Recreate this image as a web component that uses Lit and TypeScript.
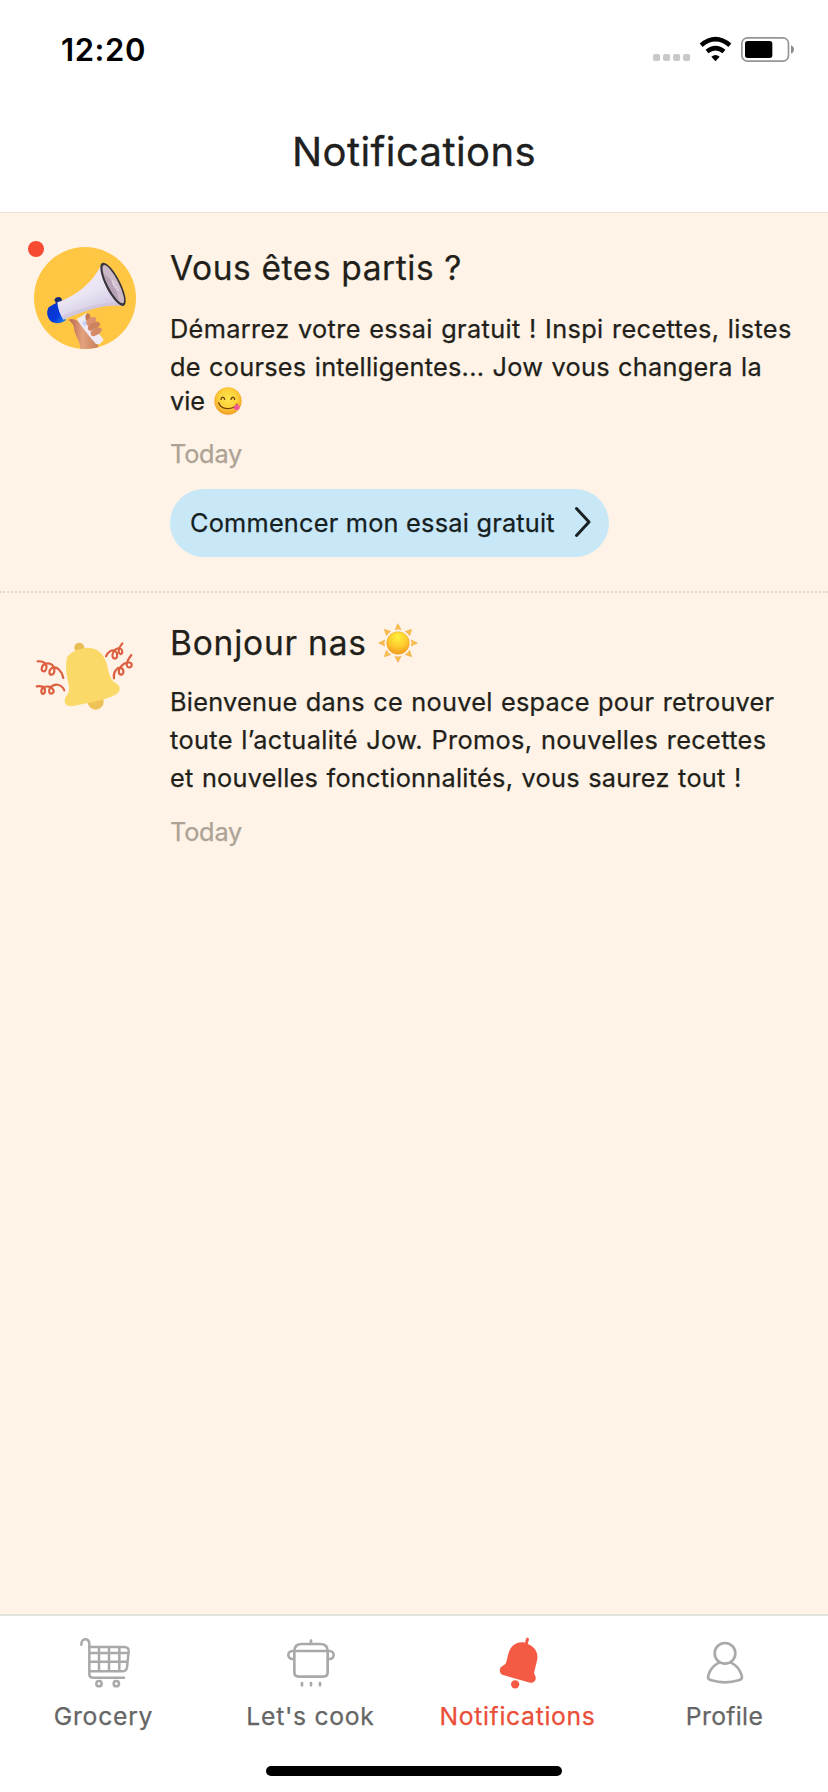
import { LitElement, html, svg, css, TemplateResult } from "lit";

interface Line {
  text: string;
  tracking: number;
  short?: boolean;
  emoji?: TemplateResult;
}

interface Notice {
  unread: boolean;
  picture: TemplateResult;
  title: string;
  tracking: number;
  titleEmoji?: TemplateResult;
  lines: Line[];
  date: string;
  action?: string;
}

const yumEmoji = html`<svg class="yum" viewBox="0 0 84 84" aria-hidden="true">
  <defs>
    <radialGradient id="face" cx="50%" cy="42%" r="58%">
      <stop offset="0" stop-color="#ffe54a" />
      <stop offset="0.6" stop-color="#fdd03a" />
      <stop offset="1" stop-color="#f19a25" />
    </radialGradient>
  </defs>
  <circle cx="42" cy="42" r="41" fill="url(#face)" />
  <path d="M21 37c2-9 9-9 11 0M51 37c2-9 9-9 11 0" fill="none" stroke="#6b3c10" stroke-width="4" stroke-linecap="round" />
  <path d="M14 47c8 22 42 24 55 4" fill="none" stroke="#7a420f" stroke-width="4" stroke-linecap="round" />
  <path d="M60 59c3-6 10-9 16-3 4 7-3 14-10 13-5-1-8-5-6-10z" fill="#f45c9c" />
  <path d="M64 59l6 5" stroke="#d63a7c" stroke-width="2" />
</svg>`;

const sunEmoji = html`<svg class="sun" viewBox="-60 -60 120 120" aria-hidden="true">
  <defs>
    <radialGradient id="sunBody" cx="50%" cy="25%" r="75%">
      <stop offset="0" stop-color="#fff03c" />
      <stop offset="0.55" stop-color="#fdcb2e" />
      <stop offset="1" stop-color="#f39a1f" />
    </radialGradient>
  </defs>
  ${[0, 45, 90, 135, 180, 225, 270, 315].map(
    (a) => svg`<path d="M0-58L9-40Q0-44-9-40Z" fill="#fbbe4b" stroke="#eda33b" stroke-width="1.5" transform="rotate(${a})" />`
  )}
  <circle r="34" fill="url(#sunBody)" stroke="#efa02b" stroke-width="1.5" />
</svg>`;

const megaphone = html`<svg class="picture" viewBox="72 66 306 306" aria-hidden="true">
  <defs>
    <clipPath id="disc"><circle cx="225" cy="219" r="153" /></clipPath>
    <linearGradient id="cone" x1="0" y1="0" x2="0.5" y2="1">
      <stop offset="0" stop-color="#f4effa" />
      <stop offset="0.6" stop-color="#eae4f3" />
      <stop offset="1" stop-color="#cdc3df" />
    </linearGradient>
    <linearGradient id="cap" x1="0" y1="0" x2="1" y2="1">
      <stop offset="0" stop-color="#0a36c4" />
      <stop offset="0.6" stop-color="#0638dc" />
      <stop offset="1" stop-color="#1f8fea" />
    </linearGradient>
    <linearGradient id="skin" x1="0" y1="0" x2="1" y2="0">
      <stop offset="0" stop-color="#b9674a" />
      <stop offset="0.45" stop-color="#e3a27f" />
      <stop offset="1" stop-color="#c67b58" />
    </linearGradient>
  </defs>
  <g clip-path="url(#disc)">
    <rect x="72" y="66" width="306" height="306" fill="#fec643" />
    <path d="M176 284c14-6 28 2 36 12l48 56 8 20h-57c0-26-17-38-19-64-1-11-9-16-16-24z" fill="url(#skin)" />
    <path d="M200 282l30-18 12 30 39 50-12 14-11-1c-20-22-40-48-58-75z" fill="#efebf6" />
    <path d="M215 293l10-7 7 12-9 7z" fill="#c9d4f8" />
    <path d="M229 267c10-5 14 5 10 16l-8 8c-5-8-7-17-2-24z" fill="#c47750" />
    <path d="M231 286c9-12 27-13 28-3 0 11-17 17-24 20-7-3-8-11-4-17z" fill="#d99170" />
    <path d="M235 304c8-11 32-20 35-8 2 12-22 16-28 23-8-3-11-9-7-15z" fill="#cd8260" />
    <path d="M243 320c8-11 29-18 32-8 2 13-18 20-25 22-8-2-10-8-7-14z" fill="#d58a67" />
    <path d="M133 225c2-8 13-12 20-7l6 14-18 8z" fill="#182b75" />
    <path d="M116 247c8-6 17-11 26-14 8 17 16 36 26 52-9 10-30 12-42 6-14-9-19-29-10-44z" fill="url(#cap)" />
    <path d="M142 232c50-17 106-56 133-116l66 127c-66-8-121 17-181 41-10-14-17-34-18-52z" fill="url(#cone)" />
    <path d="M160 284c60-25 120-49 181-41l-5-7c-65-8-119 14-179 36z" fill="#c7bdd8" opacity=".5" />
    <g transform="translate(309 178) rotate(-27)">
      <ellipse rx="22" ry="72" fill="#38353b" />
      <ellipse cx="1" rx="16" ry="64" fill="#cbb9c7" />
      <path d="M-12-40C4-26 6 12-7 52-16 30-17-16-12-40z" fill="#b8a2b6" />
      <path d="M2-14c10 6 13 24 5 40-9-4-11-30-5-40z" fill="#ded2de" />
      <path d="M4-6l7 16M1 6l10 4M2 16l7 0" stroke="#b9a9bd" stroke-width="2" />
    </g>
  </g>
</svg>`;

const partyBell = html`<svg class="picture" viewBox="72 24 306 306" aria-hidden="true">
  <circle cx="208" cy="83" r="15" fill="#e9bd55" />
  <circle cx="257" cy="245" r="24" fill="#edc256" />
  <path d="M172 110C184 95 203 86 232 83c27 0 48 15 57 45 7 23 8 44 23 58 14 9 18 13 17 22-1 15-22 22-42 28l-40 11-59 11c-14 2-24-3-24-15 0-11 6-15 11-24 6-15-1-30-4-50-4-25-4-44 1-59z" fill="#fbd968" />
  <g fill="none" stroke="#dc5f41" stroke-width="6.5" stroke-linecap="round" stroke-linejoin="round">
    <path d="M83 124c18-2 31 8 25 24-4 10-14 6-13-3 2-13 18-20 32-10 9 8 8 28-2 29-9 0-9-12-1-19 17-10 32 10 36 29" />
    <path d="M80 199c12-2 26 0 25 13-1 12-10 13-11 3-1-11 11-17 22-15 14 3 19 15 11 20-9 4-13-7-7-16 13-15 34-13 43 7" />
    <path d="M288 109c4-12 18-23 28-16 9 8 6 23-2 23-9-1-8-14-2-23 6-9 20-12 24-2 3 9-3 14-8 9-6-8 2-21 9-30" />
    <path d="M312 175c-4-17 10-36 22-31 10 6 7 21-2 20-9-3-6-18 2-26 9-10 29-15 31-5 1 10-10 12-14 5-4-10 4-21 13-33" />
  </g>
</svg>`;

const cartIcon = html`<svg class="icon" viewBox="228 105 162 165" aria-hidden="true">
  <g fill="none" stroke="#a9a9a9" stroke-width="7.5" stroke-linecap="round" stroke-linejoin="round">
    <path d="M241 134c-1-20 24-22 24-3v92q0 10 10 10h94" />
    <path d="M266 141h104q14 0 13 14l-5 47q-2 12-14 12h-98M266 159h116M266 185h113M294 142v71M324 142v71M355 142v71" />
    <circle cx="294" cy="251" r="8" />
    <circle cx="346" cy="251" r="8" />
  </g>
</svg>`;

const potIcon = html`<svg class="icon" viewBox="852 105 162 165" aria-hidden="true">
  <g fill="none" stroke="#a9a9a9" stroke-width="8" stroke-linecap="round" stroke-linejoin="round">
    <path d="M883 153h100v64q0 13-13 13h-74q-13 0-13-13zM883 153q0-21 23-21h54q23 0 23 21M933 131v-9" />
    <path d="M881 153h-4a12 12 0 0 0 0 24h4M985 153h4a12 12 0 0 1 0 24h-4M906 249v7M933 249v7M960 249v7" />
  </g>
</svg>`;

const bellIcon = html`<svg class="icon" viewBox="229.5 105 162 165" aria-hidden="true">
  <path d="M332 128l2-10q2-6 6-5 4 1 3 6l-3 13c22 8 32 28 28 48l-9 37c-1 6 5 11 5 18-1 9-8 15-17 13l-79-22c-9-2-13-9-12-17 2-11 14-12 18-19 5-12 5-28 12-41 8-15 25-26 46-21z" fill="#f55a44" />
  <circle cx="302" cy="253" r="12.5" fill="#f55a44" />
</svg>`;

const profileIcon = html`<svg class="icon" viewBox="852 105 162 165" aria-hidden="true">
  <g fill="none" stroke="#a9a9a9" stroke-width="8" stroke-linecap="round" stroke-linejoin="round">
    <circle cx="933" cy="160" r="31" />
    <path d="M915 188c-16 8-27 22-32 38-3 10 2 13 9 15 27 8 55 8 82 0 7-2 12-5 9-15-5-16-16-30-32-38" />
  </g>
</svg>`;

const notices: Notice[] = [
  {
    unread: true,
    picture: megaphone,
    title: "Vous êtes partis ?",
    tracking: 0.6,
    lines: [
      { text: "Démarrez votre essai gratuit ! Inspi recettes, listes", tracking: 0.35 },
      { text: "de courses intelligentes... Jow vous changera la", tracking: 0.25 },
      { text: "vie", tracking: 0, short: true, emoji: yumEmoji },
    ],
    date: "Today",
    action: "Commencer mon essai gratuit",
  },
  {
    unread: false,
    picture: partyBell,
    title: "Bonjour nas",
    tracking: 0.78,
    titleEmoji: sunEmoji,
    lines: [
      { text: "Bienvenue dans ce nouvel espace pour retrouver", tracking: 0.26 },
      { text: "toute l’actualité Jow. Promos, nouvelles recettes", tracking: 0.37 },
      { text: "et nouvelles fonctionnalités, vous saurez tout !", tracking: 0.26 },
    ],
    date: "Today",
  },
];

const tabs = [
  { label: "Grocery", icon: cartIcon, tracking: 0.74, active: false },
  { label: "Let's cook", icon: potIcon, tracking: 0.72, active: false },
  { label: "Notifications", icon: bellIcon, tracking: 0.68, active: true },
  { label: "Profile", icon: profileIcon, tracking: 0.35, active: false },
];

class StatusBar extends LitElement {
  static styles = css`
    :host {
      display: flex;
      justify-content: space-between;
      height: 100px;
      box-sizing: border-box;
      padding: 30px 34px 0 61px;
    }
    .time {
      font-size: 31px;
      font-weight: 600;
      line-height: 40px;
      letter-spacing: 0.6px;
      color: #000;
    }
    .status {
      width: 141px;
      height: 30px;
      margin-top: 4px;
    }
  `;
  render() {
    return html`<span class="time">12:20</span>
      <svg class="status" viewBox="159 102 423 90" aria-hidden="true">
        <g fill="#c9c9c9">
          ${[159, 189, 219, 249].map((x) => svg`<rect x=${x} y="162" width="21.5" height="21" rx="6" />`)}
        </g>
        <g fill="none" stroke="#000" stroke-width="13.5">
          <path d="M303.500 135.500Q346.500 99 389.500 135.500" />
          <path d="M321 154.500Q346.500 134 372 154.500" />
        </g>
        <path d="M334 170.500q12.500-11 25 0l-12.500 13z" fill="#000" />
        <rect x="425.500" y="113.500" width="140" height="70" rx="17" fill="none" stroke="#959595" stroke-width="5" />
        <rect x="435" y="123" width="82" height="51" rx="8" fill="#000" />
        <path d="M573 136q9 4 9 12.500t-9 12.500z" fill="#8c8c8c" />
      </svg>`;
  }
}
customElements.define("status-bar", StatusBar);

class NoticeCard extends LitElement {
  static properties = { notice: { attribute: false } };
  declare notice: Notice;
  static styles = css`
    :host {
      display: block;
    }
    .card {
      display: flex;
      gap: 34px;
      padding: 30px 30px 34px 34px;
    }
    .unread {
      padding-top: 35px;
      padding-bottom: 34px;
      border-bottom: 2px dotted #e2d8cc;
    }
    .avatar {
      position: relative;
      width: 102px;
      flex: none;
    }
    .picture {
      display: block;
      width: 102px;
      height: 102px;
      margin-top: 5px;
    }
    .unread .picture {
      margin-top: -1px;
    }
    .dot {
      position: absolute;
      left: -6px;
      top: -7px;
      width: 16px;
      height: 16px;
      border-radius: 50%;
      background: #f64a33;
    }
    .content {
      flex: 1;
      white-space: nowrap;
      -webkit-text-stroke-width: 0.25px;
    }
    .title {
      display: flex;
      align-items: center;
      margin: 0;
      font-size: 33.5px;
      font-weight: 400;
      line-height: 40px;
      color: #221f1a;
    }
    .sun {
      width: 40px;
      height: 40px;
      margin-left: 11px;
    }
    .lines {
      margin: 20px 0;
    }
    .unread .lines {
      margin: 22px 0 23px;
    }
    .line {
      display: flex;
      font-size: 25.3px;
      line-height: 38px;
      word-spacing: 1px;
      color: #221f1a;
      white-space: pre;
    }
    .short {
      line-height: 30px;
    }
    .yum {
      width: 28px;
      height: 28px;
      margin: 1px 0 0 9px;
    }
    .date {
      font-size: 25.3px;
      line-height: 30px;
      letter-spacing: -0.2px;
      color: #aca295;
    }
    .action {
      display: flex;
      align-items: center;
      width: 439px;
      height: 68px;
      box-sizing: border-box;
      margin-top: 20px;
      padding: 0 17px 2px 20px;
      border: 0;
      border-radius: 34px;
      justify-content: space-between;
      background: #c8e8f7;
      color: #16201f;
      font: inherit;
      font-size: 25.3px;
      letter-spacing: 0.23px;
    }
    .chevron {
      width: 18px;
      height: 32px;
    }
  `;
  render() {
    const n = this.notice;
    return html`<article class="card ${n.unread ? "unread" : ""}">
      <div class="avatar">${n.picture}${n.unread ? html`<span class="dot"></span>` : ""}</div>
      <div class="content">
        <h2 class="title" style="letter-spacing:${n.tracking}px">${n.title}${n.titleEmoji ?? ""}</h2>
        <div class="lines">
          ${n.lines.map(
            (l) => html`<div class="line ${l.short ? "short" : ""}" style="letter-spacing:${l.tracking}px">${l.text}${l.emoji ?? ""}</div>`
          )}
        </div>
        <div class="date">${n.date}</div>
        ${n.action
          ? html`<button class="action">
              <span>${n.action}</span>
              <svg class="chevron" viewBox="0 0 18 32" aria-hidden="true">
                <path d="M2.500 2.500l12.500 13.500-12.500 13.500" fill="none" stroke="#1b2122" stroke-width="3" stroke-linecap="round" stroke-linejoin="round" />
              </svg>
            </button>`
          : ""}
      </div>
    </article>`;
  }
}
customElements.define("notice-card", NoticeCard);

class TabBar extends LitElement {
  static styles = css`
    :host {
      display: flex;
      flex-direction: column;
      justify-content: space-between;
      align-items: center;
      height: 178px;
      box-sizing: border-box;
      padding: 19px 0 16px;
      border-top: 2px solid #e1e2de;
      background: #fff;
    }
    .tabs {
      display: grid;
      grid-template-columns: repeat(4, 1fr);
      width: 100%;
    }
    .tab {
      display: flex;
      flex-direction: column;
      align-items: center;
      gap: 10px;
      font-size: 24.7px;
      line-height: 32px;
      color: #656565;
      -webkit-text-stroke-width: 0.25px;
    }
    .active {
      color: #ea4e37;
    }
    .icon {
      width: 54px;
      height: 55px;
    }
    .home {
      width: 296px;
      height: 10px;
      border-radius: 5px;
      background: #000;
    }
  `;
  render() {
    return html`<nav class="tabs">
        ${tabs.map(
          (t) => html`<a class="tab ${t.active ? "active" : ""}">${t.icon}<span style="letter-spacing:${t.tracking}px">${t.label}</span></a>`
        )}
      </nav>
      <div class="home"></div>`;
  }
}
customElements.define("tab-bar", TabBar);

class AppRoot extends LitElement {
  static styles = css`
    :host {
      display: flex;
      flex-direction: column;
      width: 828px;
      height: 1792px;
      background: #fff;
      font-family: Inter, "Liberation Sans", sans-serif;
    }
    .header {
      height: 113px;
      box-sizing: border-box;
      padding-top: 27px;
      border-bottom: 1px solid #f0dfda;
      text-align: center;
    }
    .heading {
      margin: 0;
      font-size: 40px;
      font-weight: 400;
      line-height: 50px;
      letter-spacing: 0.42px;
      color: #202020;
      -webkit-text-stroke-width: 0.3px;
    }
    .feed {
      flex: 1;
      background: #fef3e6;
    }
  `;
  render() {
    return html`<status-bar></status-bar>
      <header class="header"><h1 class="heading">Notifications</h1></header>
      <main class="feed">${notices.map((n) => html`<notice-card .notice=${n}></notice-card>`)}</main>
      <tab-bar></tab-bar>`;
  }
}
customElements.define("app-root", AppRoot);
